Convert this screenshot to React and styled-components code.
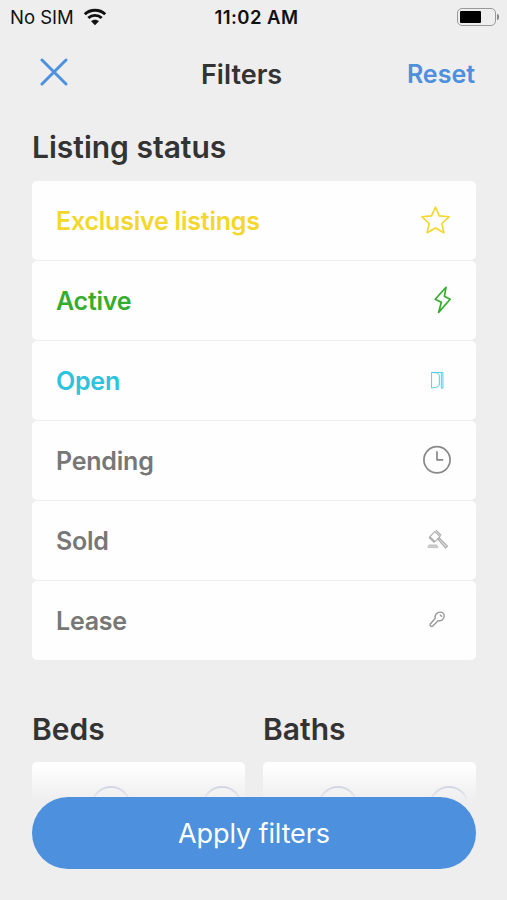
import React from "react";
import styled, { createGlobalStyle } from "styled-components";

const BLUE = "#4c90de";

const StarIcon = () => (
	<Icon viewBox="0 0 30 30" $width={1.6}>
		<path d="M13.5 2.2l3.8 8.7 9.8.9-7.3 6.7 2.1 9.2-8.4-4.7-8.4 4.7 2.1-9.2L-.1 11.8l9.6-.9z" />
	</Icon>
);

const BoltIcon = () => (
	<Icon viewBox="0 0 30 30" $width={1.7}>
		<path d="M24 2.3L13.2 14.2l6.2 3-2.8 10.2 11.6-13.1-5.8-3z" />
	</Icon>
);

const DoorIcon = () => (
	<Icon viewBox="0 0 30 30" $width={1}>
		<path d="M9.6 7.4h11.3v15.8h-1.6V7.4M9.6 7.4v15.7l6-1.2 1.7-1.9V10.2l-1.4-2.2-6.3-.6" />
	</Icon>
);

const ClockIcon = () => (
	<Icon viewBox="0 0 30 30" $width={1.7}>
		<circle cx="15" cy="14.8" r="13.1" />
		<path d="M15 6.2v8.6h6.2" />
	</Icon>
);

const GavelIcon = () => (
	<Icon viewBox="0 0 30 30" $width={1.2}>
		<path d="M13.9 5.2l5.4 5.3M7 12.3l5.4 5.3M12.8 6.6l5.2 5-5 5-5.1-4.9z" />
		<path d="M16 14.2l7.6 8.8 1.9-1.9-8-7.9z" fill="currentColor" fillOpacity="0.3" />
		<path d="M6 21.4l1.1-1.5h7.6l1 1.5v1.2H6z" fill="currentColor" fillOpacity="0.6" strokeWidth="0.6" />
	</Icon>
);

const KeyIcon = () => (
	<Icon viewBox="0 0 30 30" $width={1.4}>
		<path d="M13.2 13.2c-.7-3 1.6-6.1 4.8-6.1 2.4 0 4.2 1.7 4.2 4 0 3.2-3 5.2-6.1 4.6L10.8 21c-1 .9-3.2.3-2.7-1.8z" />
		<path d="M18 9.7l2 2" />
	</Icon>
);

const WifiIcon = () => (
	<Wifi viewBox="0 0 24 18">
		<path d="M1.8 6.3C7.3.9 16.7.9 22.2 6.3" />
		<path d="M5.3 10c3.7-3.5 9.7-3.5 13.4 0" />
		<path d="M12 17.2l-3.9-3.9c2.1-2 5.7-2 7.8 0z" fill="#111" stroke="none" />
	</Wifi>
);

const statuses = [
	{ label: "Exclusive listings", color: "#f3d72b", icon: <StarIcon /> },
	{ label: "Active", color: "#35ad2c", icon: <BoltIcon /> },
	{ label: "Open", color: "#2cc3dc", iconColor: "#55cfe0", icon: <DoorIcon /> },
	{ label: "Pending", color: "#777", iconColor: "#888", icon: <ClockIcon /> },
	{ label: "Sold", color: "#777", iconColor: "#adadad", icon: <GavelIcon /> },
	{ label: "Lease", color: "#777", iconColor: "#999", icon: <KeyIcon /> },
];

function Counter({ title, inset }) {
	return (
		<div>
			<SectionTitle>{title}</SectionTitle>
			<CounterCard $inset={inset}>
				<RoundButton />
				<RoundButton />
			</CounterCard>
		</div>
	);
}

function App() {
	return (
		<Screen>
			<GlobalStyle />
			<StatusBar>
				<Carrier>
					No SIM
					<WifiIcon />
				</Carrier>
				<Time>11:02 AM</Time>
				<BatteryWrap>
					<Battery>
						<BatteryLevel />
					</Battery>
					<BatteryTip />
				</BatteryWrap>
			</StatusBar>

			<Header>
				<CloseButton aria-label="Close">
					<svg width="28" height="28" viewBox="0 0 28 28">
						<path d="M2 2l24 24M26 2L2 26" />
					</svg>
				</CloseButton>
				<Title>Filters</Title>
				<ResetButton>Reset</ResetButton>
			</Header>

			<Content>
				<SectionTitle>Listing status</SectionTitle>
				<List>
					{statuses.map((status) => (
						<Row key={status.label} $color={status.color}>
							<RowLabel>{status.label}</RowLabel>
							<IconSlot $color={status.iconColor}>{status.icon}</IconSlot>
						</Row>
					))}
				</List>
				<Counters>
					<Counter title="Beds" inset={59} />
					<Counter title="Baths" inset={55} />
				</Counters>
			</Content>

			<Footer>
				<ApplyButton>Apply filters</ApplyButton>
			</Footer>
		</Screen>
	);
}

export default App;

const GlobalStyle = createGlobalStyle`
	* {
		box-sizing: border-box;
	}

	body {
		margin: 0;
		background-color: #eee;
		font-family: Inter, "Liberation Sans", sans-serif;
	}

	button {
		padding: 0;
		border: none;
		background: none;
		font-family: inherit;
	}
`;

const Screen = styled.div`
	position: relative;
	height: 900px;
	overflow: hidden;
	background-color: #eee;
`;

const StatusBar = styled.div`
	display: grid;
	grid-template-columns: 1fr auto 1fr;
	align-items: center;
	height: 34px;
	padding: 0 8px 0 10px;
	color: #111;
`;

const Carrier = styled.div`
	display: flex;
	align-items: center;
	gap: 9px;
	font-size: 18.5px;
	white-space: nowrap;
`;

const Wifi = styled.svg`
	width: 24px;
	height: 18px;
	fill: none;
	stroke: #111;
	stroke-width: 2.9;
`;

const Time = styled.div`
	font-size: 18.5px;
	font-weight: 600;
	letter-spacing: 0.45px;
	padding-left: 4px;
`;

const BatteryWrap = styled.div`
	display: flex;
	align-items: center;
	justify-content: flex-end;
	gap: 1px;
`;

const Battery = styled.div`
	width: 39px;
	height: 18px;
	padding: 2px;
	border: 1.5px solid #999;
	border-radius: 5px;
`;

const BatteryLevel = styled.div`
	width: 21px;
	height: 12px;
	background-color: #000;
	border-radius: 1px;
`;

const BatteryTip = styled.div`
	width: 2px;
	height: 6px;
	border-radius: 0 3px 3px 0;
	background-color: #888;
`;

const Header = styled.header`
	display: grid;
	grid-template-columns: 161px auto 1fr;
	align-items: center;
	height: 80px;
	padding: 0 32px 0 40px;
`;

const CloseButton = styled.button`
	justify-self: start;
	height: 28px;
	margin-top: -5px;

	svg {
		display: block;
		fill: none;
		stroke: ${BLUE};
		stroke-width: 3;
		stroke-linecap: round;
	}
`;

const Title = styled.h1`
	margin: 0;
	padding-top: 1px;
	font-size: 27px;
	font-weight: 600;
	line-height: 34px;
	color: #333;
`;

const ResetButton = styled.button`
	justify-self: end;
	font-size: 25px;
	font-weight: 600;
	line-height: 34px;
	color: ${BLUE};
`;

const Content = styled.main`
	padding: 13px 31px 0 32px;
`;

const SectionTitle = styled.h2`
	margin: 0;
	font-size: 30px;
	font-weight: 600;
	line-height: 40px;
	color: #333;
`;

const List = styled.div`
	display: flex;
	flex-direction: column;
	gap: 1.5px;
	margin-top: 14px;
`;

const Row = styled.div`
	display: flex;
	align-items: center;
	justify-content: space-between;
	height: 78.5px;
	padding: 0 24px;
	border-radius: 5px;
	background-color: #fefefe;
	color: ${(props) => props.$color};
`;

const RowLabel = styled.span`
	padding-top: 2px;
	font-size: 25px;
	font-weight: 600;
	letter-spacing: -0.22px;
`;

const IconSlot = styled.span`
	display: flex;
	color: ${(props) => props.$color || "inherit"};
`;

const Icon = styled.svg`
	width: 30px;
	height: 30px;
	overflow: visible;
	fill: none;
	stroke: currentColor;
	stroke-width: ${(props) => props.$width};
	stroke-linejoin: round;
`;

const Counters = styled.div`
	display: grid;
	grid-template-columns: 1fr 1fr;
	gap: 18px;
	margin-top: 49px;
`;

const CounterCard = styled.div`
	display: flex;
	gap: 71px;
	height: 80px;
	margin-top: 13px;
	padding: 24px 0 0 ${(props) => props.$inset}px;
	border-radius: 5px;
	background-color: #fff;
	overflow: hidden;
`;

const RoundButton = styled.button`
	flex: none;
	width: 40px;
	height: 40px;
	border: 2px solid #a9b4d6;
	border-radius: 50%;
`;

const Footer = styled.footer`
	position: absolute;
	left: 0;
	right: 0;
	bottom: 0;
	padding: 32px 31px 31.5px 32px;
	background: linear-gradient(rgba(238, 238, 238, 0), #eee 36px);
`;

const ApplyButton = styled.button`
	display: block;
	width: 100%;
	height: 72px;
	padding-top: 2px;
	border-radius: 36px;
	background-color: ${BLUE};
	font-size: 27px;
	letter-spacing: -0.12px;
	color: #fff;
`;
